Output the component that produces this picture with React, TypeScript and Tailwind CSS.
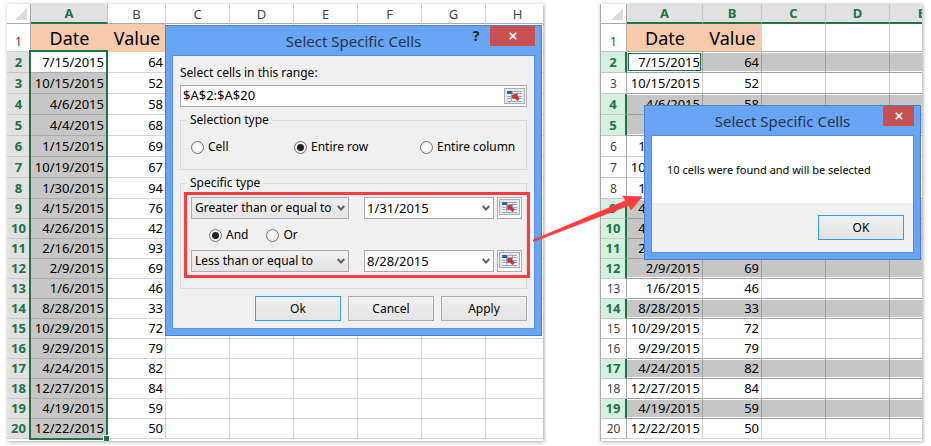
import { useState } from "react";
//lib
import clsx from "clsx";

//data
const rows = [
  { date: "7/15/2015", value: 64 },
  { date: "10/15/2015", value: 52 },
  { date: "4/6/2015", value: 58 },
  { date: "4/4/2015", value: 68 },
  { date: "1/15/2015", value: 69 },
  { date: "10/19/2015", value: 67 },
  { date: "1/30/2015", value: 94 },
  { date: "4/15/2015", value: 76 },
  { date: "4/26/2015", value: 42 },
  { date: "2/16/2015", value: 93 },
  { date: "2/9/2015", value: 69 },
  { date: "1/6/2015", value: 46 },
  { date: "8/28/2015", value: 33 },
  { date: "10/29/2015", value: 72 },
  { date: "9/29/2015", value: 79 },
  { date: "4/24/2015", value: 82 },
  { date: "12/27/2015", value: 84 },
  { date: "4/19/2015", value: 59 },
  { date: "12/22/2015", value: 50 },
];

const matched = [2, 4, 5, 9, 10, 11, 12, 14, 17, 19];

const isMatched = (row: number) => matched.includes(row);

//the first rows of the sheet are one pixel taller
const rowHeight = (row: number) => (row < 9 ? "h-[21px]" : "h-5");

//icons
const Corner = () => (
  <svg width="12" height="12" viewBox="0 0 12 12" className="ml-auto mr-[3px]">
    <path d="M12 0V12H0Z" fill="#dcdcdc" />
  </svg>
);

const Chevron = () => (
  <svg
    width="8"
    height="7"
    viewBox="0 0 8 7"
    className="pointer-events-none absolute right-1 top-2"
  >
    <path d="M0.8 1L4 4.6L7.2 1" fill="none" stroke="#606060" strokeWidth="2" />
  </svg>
);

const Cross = () => (
  <svg width="8" height="8" viewBox="0 0 8 8">
    <path d="M0.8 0.8L7.2 7.2M7.2 0.8L0.8 7.2" stroke="#fff" strokeWidth="1.7" />
  </svg>
);

const RangeIcon = () => (
  <svg width="15" height="11" viewBox="0 0 15 11">
    <rect width="15" height="11" fill="#8fa9d3" />
    <rect width="5" height="3" fill="#2f62b8" />
    <path
      d="M6 1h4v1H6zM11 1h4v1h-4zM0 3h4v2H0zM5 3h5v1H5zM11 3h4v2h-4zM0 6h4v1H0zM11 6h4v1h-4zM0 8h4v2H0zM5 8h5v2H5zM11 8h4v2h-4z"
      fill="#f4f7fc"
    />
    <path d="M5 3.4L10.6 2.8L9.8 4.8L12.8 7.6L10.4 10L7.4 7L5.8 8.4Z" fill="#d5301d" />
  </svg>
);

type ButtonProps = { label: string; primary?: boolean };

const DialogButton = ({ label, primary }: ButtonProps) => (
  <button
    className={clsx(
      "h-[25px] w-[86px] border bg-linear-to-b from-[#f0f0f0] to-[#e4e4e4] text-center text-xs leading-5",
      primary ? "border-[#3399ff]" : "border-[#acacac]"
    )}
  >
    {label}
  </button>
);

const RangeButton = () => (
  <button
    aria-label="Pick range"
    className="flex h-4 w-[21px] items-center justify-center border border-[#acacac] bg-[#e8e8e8]"
  >
    <RangeIcon />
  </button>
);

type RadioProps = {
  name: string;
  label: string;
  checked: boolean;
  onChange: () => void;
};

const Radio = ({ name, label, checked, onChange }: RadioProps) => (
  <label className="flex items-center gap-1 leading-4">
    <input
      type="radio"
      name={name}
      checked={checked}
      onChange={onChange}
      className="size-[13px] appearance-none rounded-full border border-[#707070] bg-white bg-clip-content p-[2px] checked:bg-[#222]"
    />
    {label}
  </label>
);

type ConditionProps = { label: string; operator: string; date: string };

const Condition = ({ label, operator, date }: ConditionProps) => (
  <div className="flex">
    <div className="relative w-[158px] shrink-0">
      <select
        aria-label={label + " operator"}
        className="h-[22px] w-full appearance-none border border-[#acacac] bg-linear-to-b from-[#f0f0f0] to-[#e4e4e4] pl-[3px] leading-5"
      >
        <option>{operator}</option>
      </select>
      <Chevron />
    </div>
    <div className="relative ml-[15px] w-[130px] shrink-0">
      <select
        aria-label={label + " date"}
        className="h-[22px] w-full appearance-none border border-[#acacac] bg-white pl-[2px] text-[13px] leading-5"
      >
        <option>{date}</option>
      </select>
      <Chevron />
    </div>
    <div className="ml-[3px] flex h-[22px] w-[25px] shrink-0 justify-center border border-[#acacac] bg-white pt-px">
      <RangeButton />
    </div>
  </div>
);

const ColumnSheet = () => (
  <table className="w-[543px] min-w-full table-fixed border-separate border-spacing-0">
    <colgroup>
      <col className="w-[24px]" />
      <col className="w-[77px]" />
      <col className="w-[58px]" />
      <col span={6} className="w-[64px]" />
    </colgroup>
    <thead>
      <tr className="h-5 text-[13px] leading-[18px] text-[#444]">
        <td className="border-b border-r border-[#ababab]">
          <Corner />
        </td>
        <th className="border-b-2 border-r border-b-[#217346] border-r-[#c8c8c8] bg-[#e1e1e1] font-bold text-[#217346]">
          A
        </th>
        {["B", "C", "D", "E", "F", "G", "H"].map((col) => (
          <th key={col} className="border-b border-r border-b-[#ababab] border-r-[#d4d4d4] font-normal">
            {col}
          </th>
        ))}
      </tr>
    </thead>
    <tbody>
      <tr className="h-7">
        <th className="border-b border-r border-b-[#d4d4d4] border-r-[#ababab] align-bottom text-xs leading-[18px] font-normal text-[#444]">
          1
        </th>
        <th className="border-b border-[#f8cbad] bg-[#f8cbad] text-lg leading-[26px] font-normal">Date</th>
        <th className="border-b border-[#f8cbad] bg-[#f8cbad] text-lg leading-[26px] font-normal">Value</th>
        {[3, 4, 5, 6, 7, 8].map((c) => (
          <td key={c} className="border-b border-r border-[#d4d4d4]" />
        ))}
      </tr>
      {rows.map((item, i) => (
        <tr key={i} className={clsx(rowHeight(i + 2), "text-[13px] leading-[19px]")}>
          <th className="border-b border-r border-b-[#c8c8c8] border-r-[#ababab] bg-[#e1e1e1] text-[#217346]">
            {i + 2}
          </th>
          <td
            className={clsx(
              "border-b border-[#ababab] pr-1 text-right",
              i === 0 ? "bg-white" : "bg-[#c6c6c6]"
            )}
          >
            {item.date}
          </td>
          <td className="border-b border-r border-[#d4d4d4] pr-[2px] text-right">{item.value}</td>
          {[3, 4, 5, 6, 7, 8].map((c) => (
            <td key={c} className="border-b border-r border-[#d4d4d4]" />
          ))}
        </tr>
      ))}
    </tbody>
  </table>
);

const RowSheet = () => (
  <table className="w-[353px] min-w-full table-fixed border-separate border-spacing-0">
    <colgroup>
      <col className="w-[26px]" />
      <col className="w-[76px]" />
      <col className="w-[59px]" />
      <col span={3} className="w-[64px]" />
    </colgroup>
    <thead>
      <tr className="h-5 text-[13px] leading-[18px] text-[#217346]">
        <td className="border-b border-r border-[#ababab]">
          <Corner />
        </td>
        {["A", "B", "C", "D", "E"].map((col) => (
          <th
            key={col}
            className="border-b-2 border-r border-b-[#217346] border-r-[#c8c8c8] bg-[#e1e1e1] font-bold"
          >
            {col}
          </th>
        ))}
      </tr>
    </thead>
    <tbody>
      <tr className="h-7">
        <th className="border-b border-r border-b-[#c8c8c8] border-r-[#ababab] align-bottom text-xs leading-[18px] font-normal text-[#444]">
          1
        </th>
        <th className="border-b border-b-[#ababab] bg-[#f8cbad] text-lg leading-[26px] font-normal">Date</th>
        <th className="border-b border-b-[#ababab] bg-[#f8cbad] text-lg leading-[26px] font-normal">Value</th>
        {[3, 4, 5].map((c) => (
          <td key={c} className="border-b border-r border-b-[#ababab] border-r-[#d4d4d4]" />
        ))}
      </tr>
      {rows.map((item, i) => {
        const row = i + 2;
        const on = isMatched(row);
        const next = isMatched(row + 1);
        const cell = clsx(
          "border-b border-r",
          on || next ? "border-b-[#a0a0a0]" : "border-b-[#d4d4d4]",
          on ? "border-r-[#a0a0a0] bg-[#c6c6c6]" : "border-r-[#d4d4d4]",
          on && !isMatched(row - 1) && next && "shadow-[inset_0_1px_0_#fff]",
          on && isMatched(row - 1) && !next && "shadow-[inset_0_-1px_0_#fff]",
          on && !isMatched(row - 1) && !next && "shadow-[inset_0_1px_0_#fff,inset_0_-1px_0_#fff]"
        );
        return (
          <tr key={row} className={clsx(rowHeight(row), "text-[13px] leading-[19px]")}>
            <th
              className={clsx(
                "border-b border-b-[#c8c8c8]",
                on
                  ? "border-r-2 border-r-[#217346] bg-[#d3f0e0] text-[#217346]"
                  : "border-r border-r-[#ababab] text-xs leading-[19px] font-normal text-[#444]"
              )}
            >
              {row}
            </th>
            <td className={clsx(cell, "pr-[2px] text-right", i === 0 && "relative")}>
              {i === 0 && (
                <span className="absolute inset-px border border-[#217346] bg-white leading-[16px]">
                  {item.date}
                </span>
              )}
              {i > 0 && item.date}
            </td>
            <td className={clsx(cell, "pr-[2px] text-right")}>{item.value}</td>
            {[3, 4, 5].map((c) => (
              <td key={c} className={cell} />
            ))}
          </tr>
        );
      })}
    </tbody>
  </table>
);

const SelectDialog = () => {
  const [type, setType] = useState("row");
  const [join, setJoin] = useState("and");

  return (
    <div
      role="dialog"
      aria-label="Select Specific Cells"
      className="absolute left-[158px] top-[21px] w-[377px] border border-[#4a7fc9] bg-[#69a5f4] px-[6px] pb-[6px] text-xs"
    >
      <div className="relative flex h-[29px] items-center justify-center">
        <h2 className="text-[15px] leading-5 text-[#26344a]">Select Specific Cells</h2>
        <div className="absolute right-0 top-0 flex">
          <button aria-label="Help" className="w-7 text-sm leading-5 font-bold text-[#222]">
            ?
          </button>
          <button
            aria-label="Close"
            className="flex h-5 w-[45px] items-center justify-center bg-[#c75050]"
          >
            <Cross />
          </button>
        </div>
      </div>
      <div className="border border-[#5790dc] bg-[#f0f0f0] px-[7px] pb-[7px] pt-2">
        <label htmlFor="range" className="block leading-[17px]">
          Select cells in this range:
        </label>
        <div className="mt-1 flex h-[22px] items-center border border-[#acacac] bg-white pr-px">
          <input
            id="range"
            defaultValue="$A$2:$A$20"
            className="min-w-0 flex-1 bg-transparent pl-[2px] text-[13px] outline-none"
          />
          <RangeButton />
        </div>
        <fieldset className="mt-[5px] h-[58px] min-w-0 border border-[#dcdcdc] px-[10px] pt-[11px]">
          <legend className="-ml-1 px-[3px] leading-4">Selection type</legend>
          <div className="grid grid-cols-[103px_126px_auto]">
            <Radio name="type" label="Cell" checked={type === "cell"} onChange={() => setType("cell")} />
            <Radio name="type" label="Entire row" checked={type === "row"} onChange={() => setType("row")} />
            <Radio
              name="type"
              label="Entire column"
              checked={type === "column"}
              onChange={() => setType("column")}
            />
          </div>
        </fieldset>
        <fieldset className="relative mt-[5px] h-[114px] min-w-0 border border-[#dcdcdc] px-[10px] pt-[6px]">
          <legend className="-ml-1 px-[3px] leading-4">Specific type</legend>
          <Condition label="First" operator="Greater than or equal to" date="1/31/2015" />
          <div className="flex h-[31px] items-center gap-[18px] pt-px pl-[18px]">
            <Radio name="join" label="And" checked={join === "and"} onChange={() => setJoin("and")} />
            <Radio name="join" label="Or" checked={join === "or"} onChange={() => setJoin("or")} />
          </div>
          <Condition label="Second" operator="Less than or equal to" date="8/28/2015" />
          <div className="pointer-events-none absolute -right-1 bottom-[10px] left-[3px] h-[86px] border-3 border-[#ff3b3b]" />
        </fieldset>
        <div className="mt-[7px] flex justify-end gap-[7px]">
          <DialogButton label="Ok" primary />
          <DialogButton label="Cancel" />
          <DialogButton label="Apply" />
        </div>
      </div>
    </div>
  );
};

const ResultDialog = () => (
  <div
    role="dialog"
    aria-label="Search result"
    className="absolute left-11 top-[101px] w-[277px] border border-[#4a7fc9] bg-[#69a5f4] px-[6px] pb-[6px] text-xs"
  >
    <div className="relative flex h-[29px] items-center justify-center">
      <h2 className="text-[15px] leading-5 text-[#26344a]">Select Specific Cells</h2>
      <button
        aria-label="Close"
        className="absolute right-0 top-0 flex h-5 w-[31px] items-center justify-center bg-[#c75050]"
      >
        <Cross />
      </button>
    </div>
    <div className="border border-[#5790dc] bg-[#f0f0f0]">
      <p className="h-[67px] bg-white px-[15px] pt-[26px] text-[11px] leading-4">
        10 cells were found and will be selected
      </p>
      <div className="flex justify-end px-[9px] py-3">
        <DialogButton label="OK" primary />
      </div>
    </div>
  </div>
);

const App = () => {
  return (
    <main className="flex bg-white py-1 pr-[9px] pl-[7px] font-['Noto_Sans','Open_Sans',sans-serif] text-black">
      <section className="relative h-[437px] min-w-0 flex-[536] shadow-[1px_1px_4px_rgba(0,0,0,0.35)]">
        <div className="h-full overflow-hidden">
          <ColumnSheet />
        </div>
        <div className="absolute left-[22px] top-[46px] h-[390px] w-[79px] border-2 border-[#217346]">
          <span className="absolute -right-[3px] -bottom-[3px] size-[6px] border-t border-l border-white bg-[#217346]" />
        </div>
        <SelectDialog />
      </section>
      <section className="relative ml-[57px] h-[437px] min-w-0 flex-[322] shadow-[1px_1px_4px_rgba(0,0,0,0.35)]">
        <div className="h-full overflow-hidden border-l border-[#ababab]">
          <RowSheet />
        </div>
        <ResultDialog />
        <svg
          width="112"
          height="50"
          viewBox="0 0 112 50"
          className="pointer-events-none absolute -left-[67px] top-[190px]"
        >
          <path
            d="M0 46L93 6.5L89.5 2L109 2.7L98 16L96 11.5L0.6 47.5Z"
            fill="#ff3b3b"
            stroke="#ff3b3b"
            strokeWidth="0.6"
          />
        </svg>
      </section>
    </main>
  );
};

export default App;
